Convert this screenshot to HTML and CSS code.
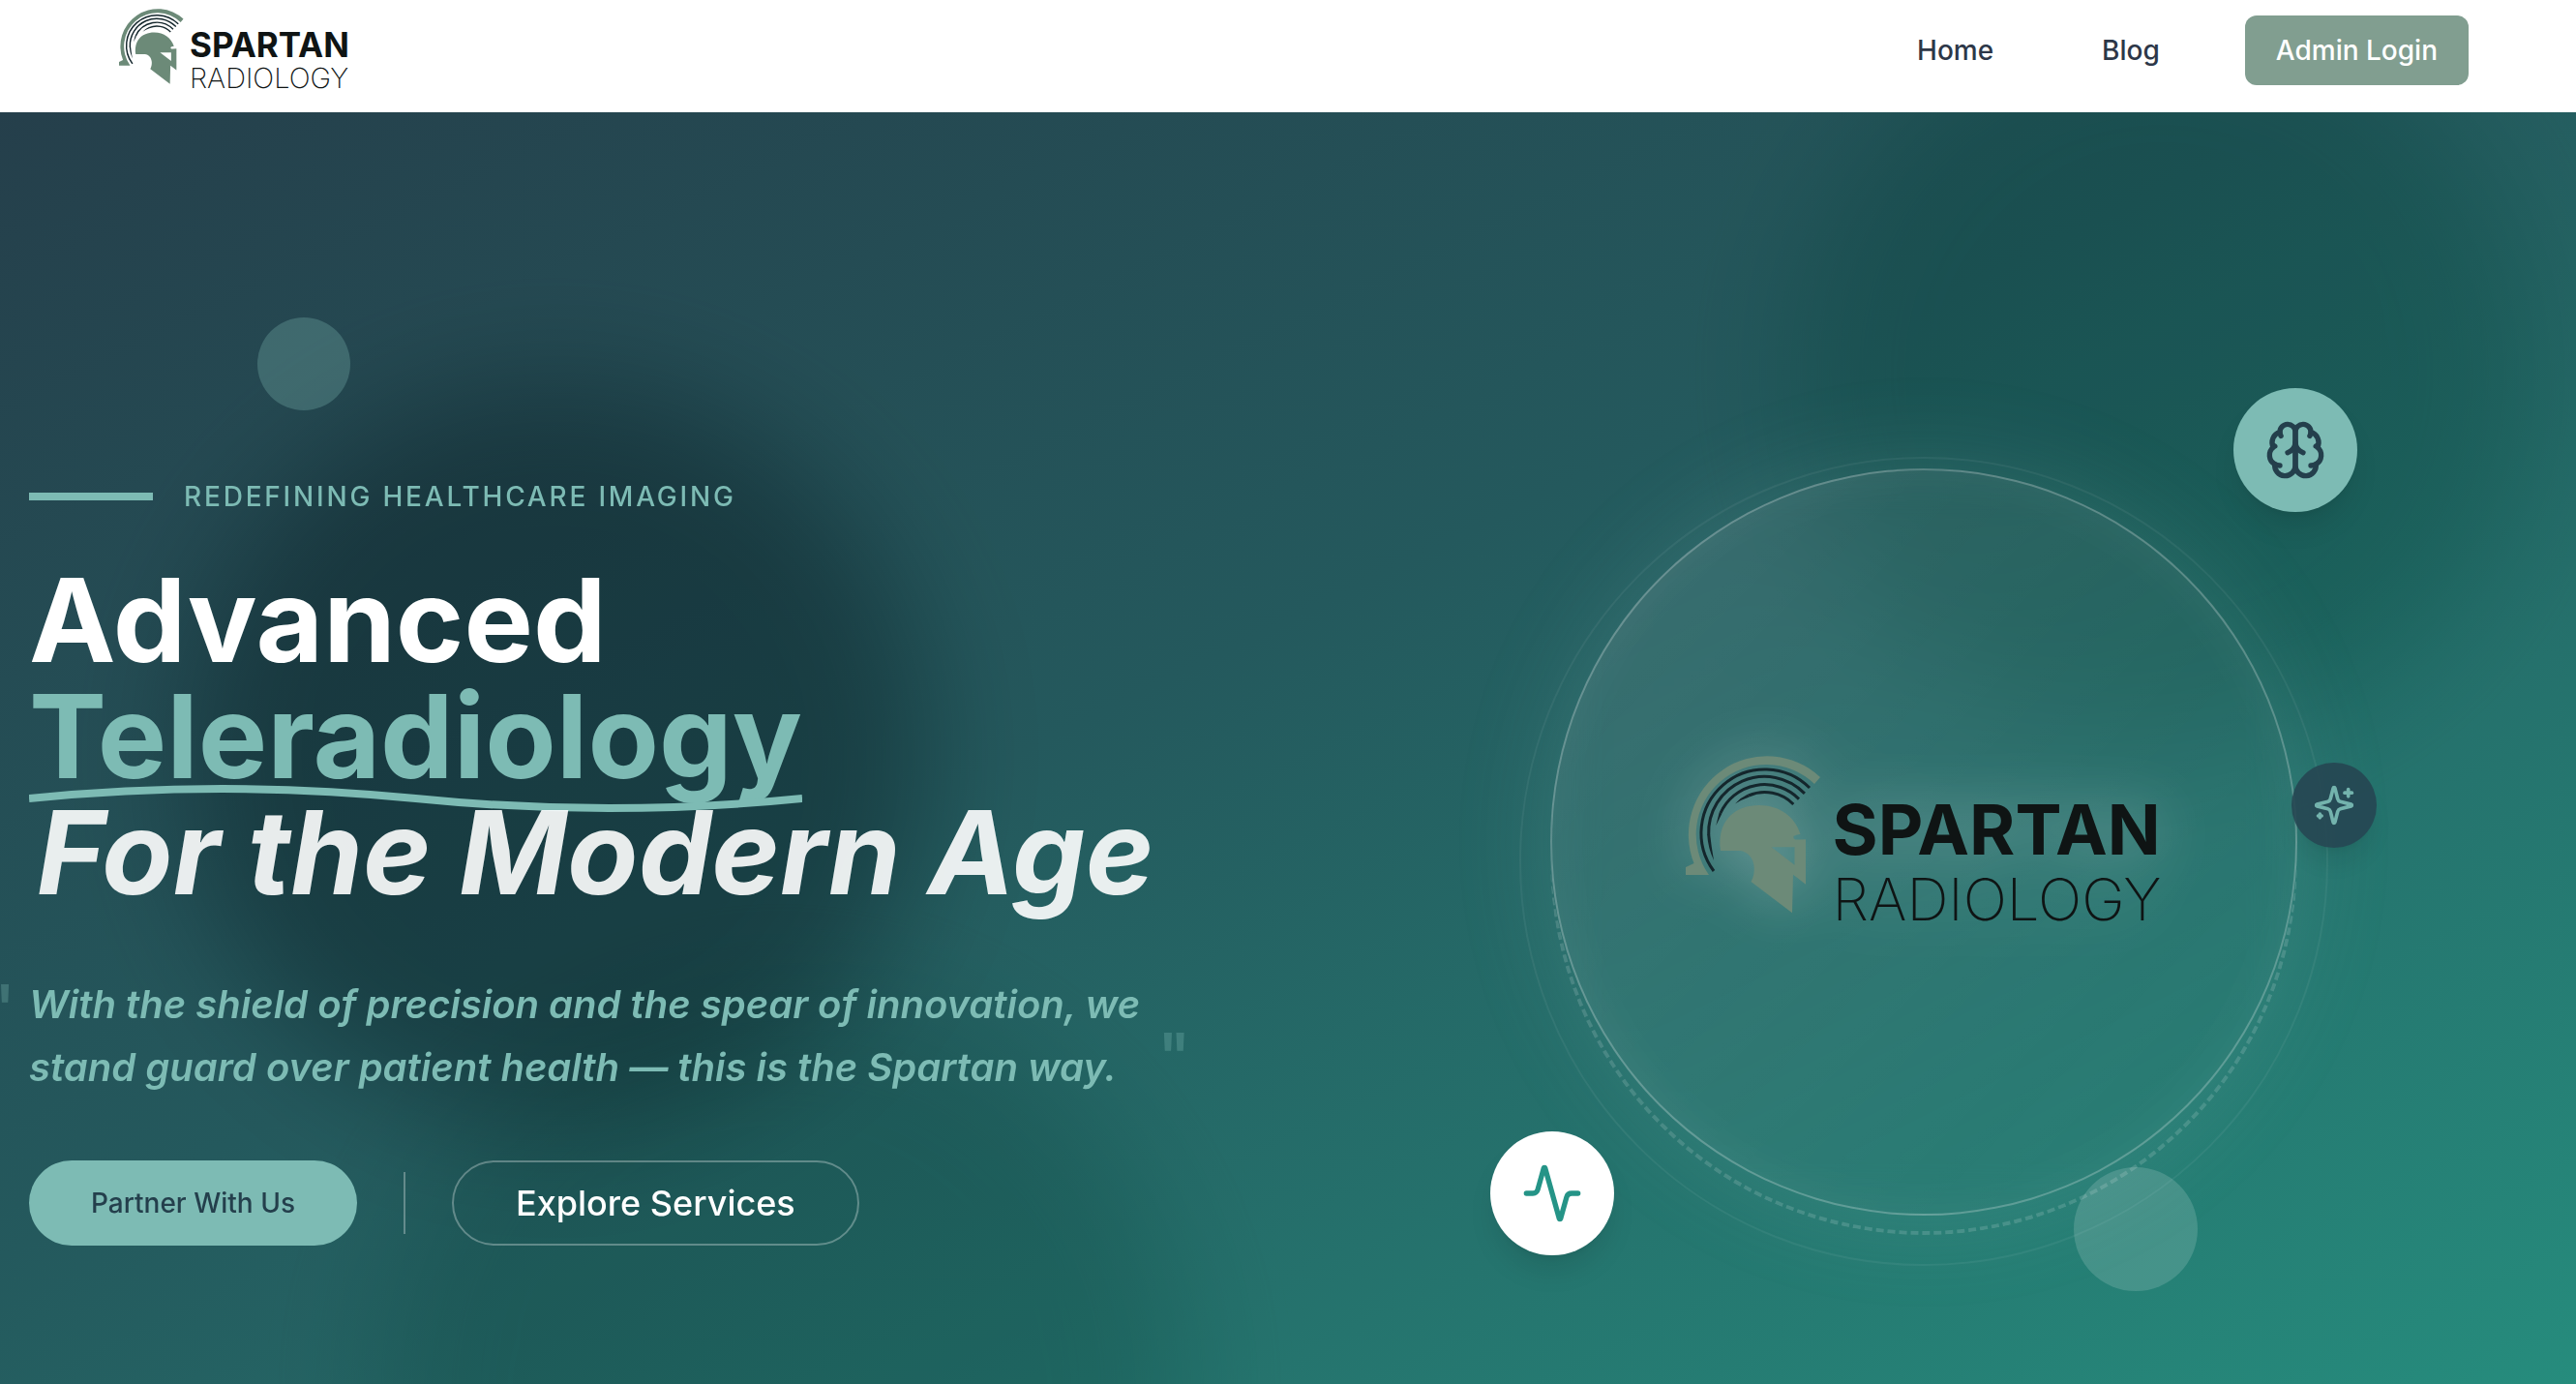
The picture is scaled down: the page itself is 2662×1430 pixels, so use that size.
FILE: index.html
```html
<!DOCTYPE html>
<html lang="en">
<head>
<meta charset="utf-8">
<meta name="viewport" content="width=device-width, initial-scale=1">
<title>Spartan Radiology</title>
<link rel="stylesheet" href="styles.css">
</head>
<body>
<svg class="sprite" aria-hidden="true">
  <symbol id="helmet" viewBox="0 0 140 163">
    <path class="helmet-fill" d="M139 22A81 81 0 0 0 8.500 111L0 115V123H24A72.300 72.300 0 0 1 133 29Z"/>
    <g class="helmet-lines">
      <path d="M128 33A65.750 65.750 0 0 0 29 119"/>
      <path d="M122.900 38.900A57.800 57.800 0 0 0 23.700 82"/>
      <path d="M117 44.600A49.800 49.800 0 0 0 36 59"/>
      <path d="M111.300 50A41.800 41.800 0 0 0 65 41"/>
    </g>
    <g class="helmet-tips">
      <path d="M22.200 81.500Q23 95 29 108Q26.500 94 25.200 81.500Z"/>
      <path d="M34.600 58.400L31.300 72L37.400 59.600Z"/>
      <path d="M64.400 39.600Q57 43 51 49.400Q58 45 65.600 42.400Z"/>
    </g>
    <path class="helmet-fill" fill-rule="evenodd" d="M36 98C32 70 48 51 76 51C97 51 113 63 118.600 81C114 82 111.500 82 111.400 84C111.500 86 113 86.700 116 86.500L124 86.300V132.700L111 122.700L110 162.300L67.500 130C70 125 71 121 70.700 115C70 105 64 99 56 98ZM88.600 94.300H112.500V112.700Z"/>
  </symbol>
</svg>

<header class="nav">
  <a class="brand" href="#" aria-label="Spartan Radiology">
    <svg class="brand-mark" aria-hidden="true"><use href="#helmet"/></svg>
    <span class="brand-words"><span class="brand-strong">SPARTAN</span><span class="brand-light">RADIOLOGY</span></span>
  </a>
  <nav class="nav-links">
    <a class="nav-link" href="#">Home</a>
    <a class="nav-link" href="#">Blog</a>
    <button class="nav-login" type="button">Admin Login</button>
  </nav>
</header>

<main class="hero">
  <div class="blob blob-navy"></div>
  <div class="blob blob-teal"></div>
  <div class="blob blob-mint"></div>
  <div class="orb orb-small"></div>

  <div class="hero-grid">
    <section class="copy">
      <p class="eyebrow"><span class="eyebrow-bar"></span>REDEFINING HEALTHCARE IMAGING</p>
      <h1 class="title">
        <span class="title-line">Advanced</span>
        <span class="title-accent">Teleradiology<svg class="swash" viewBox="0 0 800 28" preserveAspectRatio="none" aria-hidden="true"><path d="M0 14Q200 -6 400 14T800 14"/></svg></span>
        <span class="title-line title-italic">For the Modern Age</span>
      </h1>
      <p class="quote">With the shield of precision and the spear of innovation, we stand guard over patient health — this is the Spartan way.</p>
      <div class="actions">
        <button class="btn btn-solid" type="button">Partner With Us</button>
        <span class="divider"></span>
        <button class="btn btn-outline" type="button">Explore Services</button>
      </div>
    </section>

    <section class="visual">
      <div class="rings">
        <div class="ring-dashed"></div>
        <div class="disc">
          <div class="disc-logo">
            <svg class="disc-mark" aria-hidden="true"><use href="#helmet"/></svg>
            <span class="disc-words"><span class="disc-strong">SPARTAN</span><span class="disc-light">RADIOLOGY</span></span>
          </div>
        </div>
        <div class="badge badge-brain">
          <svg class="icon" viewBox="0 0 24 24" aria-hidden="true"><path d="M12 5a3 3 0 1 0-5.997.125 4 4 0 0 0-2.526 5.770 4 4 0 0 0 .556 6.588A4 4 0 1 0 12 18Z"/><path d="M12 5a3 3 0 1 1 5.997.125 4 4 0 0 1 2.526 5.770 4 4 0 0 1-.556 6.588A4 4 0 1 1 12 18Z"/><path d="M15 13a4.500 4.500 0 0 1-3-4 4.500 4.500 0 0 1-3 4"/><path d="M17.599 6.500a3 3 0 0 0 .399-1.375"/><path d="M6.003 5.125A3 3 0 0 0 6.401 6.500"/><path d="M3.477 10.896a4 4 0 0 1 .585-.396"/><path d="M19.938 10.500a4 4 0 0 1 .585.396"/><path d="M6 18a4 4 0 0 1-1.967-.516"/><path d="M19.967 17.484A4 4 0 0 1 18 18"/></svg>
        </div>
        <div class="badge badge-sparkles">
          <svg class="icon icon-small" viewBox="0 0 24 24" aria-hidden="true"><path d="M9.937 15.500A2 2 0 0 0 8.500 14.063l-6.135-1.582a.5.5 0 0 1 0-.962L8.500 9.936A2 2 0 0 0 9.937 8.500l1.582-6.135a.5.5 0 0 1 .963 0L14.063 8.500A2 2 0 0 0 15.500 9.937l6.135 1.581a.5.5 0 0 1 0 .964L15.500 14.063a2 2 0 0 0-1.437 1.437l-1.582 6.135a.5.5 0 0 1-.963 0z"/><path d="M20 3v4"/><path d="M22 5h-4"/><path d="M4 17v2"/><path d="M5 18H3"/></svg>
        </div>
        <div class="badge badge-pulse">
          <svg class="icon" viewBox="0 0 24 24" aria-hidden="true"><path d="M22 12h-2.480a2 2 0 0 0-1.930 1.460l-2.350 8.360a.25.25 0 0 1-.480 0L9.240 2.180a.25.25 0 0 0-.480 0l-2.350 8.360A2 2 0 0 1 4.490 12H2"/></svg>
        </div>
        <div class="orb orb-large"></div>
      </div>
    </section>
  </div>
</main>
</body>
</html>
```
FILE: styles.css
```css
:root {
  --navy: #264653;
  --teal: #2a9d8f;
  --mint: #7dbbb4;
  --sage: #819e90;
}

* { box-sizing: border-box; }

body {
  margin: 0;
  min-height: 100vh;
  display: flex;
  flex-direction: column;
  font-family: Inter, "Liberation Sans", sans-serif;
  background: #fff;
}

h1, p { margin: 0; }
button { font-family: inherit; cursor: pointer; }
a { text-decoration: none; }

.sprite { position: absolute; width: 0; height: 0; }
.helmet-fill { fill: #6c8a78; }
.helmet-lines { fill: none; stroke: #14262c; stroke-width: 3; }
.helmet-tips { fill: #14262c; }

/* Navigation */
.nav {
  display: flex;
  align-items: flex-start;
  justify-content: space-between;
  height: 116px;
  padding: 9px 111px 0 123px;
  background: #fff;
}
.brand { display: flex; gap: 6px; color: #0f1414; }
.brand-mark { width: 67px; height: 78px; }
.brand-words { display: flex; flex-direction: column; padding-top: 18px; }
.brand-strong { font-size: 35px; line-height: 38px; font-weight: 700; }
.brand-light { font-size: 29px; line-height: 32px; font-weight: 200; }

.nav-links { display: flex; align-items: center; gap: 64px; padding-top: 7px; }
.nav-link { padding: 0 24px; font-size: 28px; line-height: 40px; font-weight: 500; color: #2d3748; }
.nav-login {
  height: 72px;
  padding: 0 32px;
  border: 0;
  border-radius: 12px;
  background: var(--sage);
  color: #fff;
  font-size: 28px;
  font-weight: 500;
}

/* Hero */
.hero {
  position: relative;
  isolation: isolate;
  flex: 1;
  display: flex;
  align-items: center;
  padding: 234px 30px 0;
  overflow: hidden;
  background: linear-gradient(to bottom right, #253f4b, #24595d 45%, #268c7d);
}
.hero-grid {
  flex: 1;
  display: grid;
  grid-template-columns: 1fr 1fr;
  align-items: center;
  gap: 24px;
}

.blob {
  position: absolute;
  z-index: -1;
  width: 768px;
  height: 768px;
  border-radius: 50%;
  mix-blend-mode: multiply;
  filter: blur(64px);
  opacity: 0.4;
}
.blob-navy { left: 190px; top: 280px; background: var(--navy); }
.blob-teal { right: 44px; top: -116px; background: #2fb5a0; opacity: 0.35; }
.blob-mint { left: 384px; top: 900px; width: 844px; height: 844px; background: var(--mint); }

.orb { position: absolute; border-radius: 50%; }
.orb-small { left: 10%; top: 212px; width: 96px; height: 96px; background: rgba(125, 187, 180, 0.3); }
.orb-large { right: 133px; bottom: -28px; width: 128px; height: 128px; background: rgba(255, 255, 255, 0.15); }

/* Left column */
.eyebrow {
  display: flex;
  align-items: center;
  gap: 32px;
  margin-bottom: 48px;
  font-size: 28px;
  line-height: 40px;
  font-weight: 500;
  letter-spacing: 0.1em;
  color: var(--mint);
}
.eyebrow-bar { width: 128px; height: 8px; background: var(--mint); }

.title { font-size: 120px; line-height: 120px; font-weight: 700; color: #fff; }
.title-line { display: block; }
.title-accent { position: relative; display: table; color: var(--mint); }
.title-italic { position: relative; padding-left: 8px; font-style: italic; color: rgba(255, 255, 255, 0.9); }
.swash {
  position: absolute;
  left: 0;
  bottom: -18px;
  width: 100%;
  height: 28px;
  fill: none;
  stroke: var(--mint);
  stroke-width: 8;
}

.quote {
  position: relative;
  width: fit-content;
  max-width: 1184px;
  margin: 64px 0;
  font-size: 40px;
  line-height: 65px;
  font-weight: 600;
  font-style: italic;
  color: var(--mint);
}
.quote::before,
.quote::after {
  content: '"';
  position: absolute;
  font-size: 64px;
  line-height: 72px;
  font-style: normal;
  opacity: 0.3;
}
.quote::before { left: -48px; top: 0; }
.quote::after { right: -16px; bottom: 8px; }

.actions { display: flex; align-items: center; gap: 48px; }
.btn { height: 88px; padding: 0 64px; border-radius: 44px; font-weight: 500; }
.btn-solid { border: 0; background: var(--mint); color: #243f4c; font-size: 28px; }
.btn-outline { border: 2px solid rgba(255, 255, 255, 0.3); background: none; color: #fff; font-size: 36px; }
.divider { width: 2px; height: 64px; background: rgba(255, 255, 255, 0.3); }

/* Right column */
.visual { display: flex; justify-content: center; }
.rings {
  position: relative;
  width: 836px;
  height: 836px;
  border: 2px solid rgba(255, 255, 255, 0.06);
  border-radius: 50%;
}
/* The mask keeps the dashes out of the translucent disc */
.ring-dashed {
  position: absolute;
  inset: 30px;
  border: 4px dashed rgba(255, 255, 255, 0.15);
  border-radius: 50%;
  mask-image: radial-gradient(circle at 50% 366px, transparent 386px, #000 387px);
}
.disc {
  position: absolute;
  left: 30px;
  right: 30px;
  top: 10px;
  height: 772px;
  display: flex;
  align-items: center;
  justify-content: center;
  border: 2px solid rgba(255, 255, 255, 0.25);
  border-radius: 50%;
  background: linear-gradient(to bottom right, rgba(255, 255, 255, 0.1), rgba(255, 255, 255, 0));
  backdrop-filter: blur(24px);
  box-shadow: 0 0 100px rgba(125, 187, 180, 0.2), inset 0 0 60px rgba(255, 255, 255, 0.05);
}
.disc-logo {
  display: flex;
  gap: 12px;
  color: #0f1414;
  filter: drop-shadow(0 0 30px rgba(255, 255, 255, 0.3));
}
.disc-mark { width: 140px; height: 163px; }
.disc-words { display: flex; flex-direction: column; padding-top: 34px; }
.disc-strong { font-size: 72px; line-height: 84px; font-weight: 700; }
.disc-light { font-size: 60px; line-height: 60px; font-weight: 200; }

.badge {
  position: absolute;
  display: grid;
  place-items: center;
  width: 128px;
  height: 128px;
  border-radius: 50%;
  box-shadow: 0 20px 30px -6px rgba(0, 0, 0, 0.1), 0 8px 12px -8px rgba(0, 0, 0, 0.1);
}
.badge-brain { right: -32px; top: -73px; background: var(--mint); color: #243f4c; }
.badge-sparkles { right: -52px; top: 314px; width: 88px; height: 88px; background: var(--navy); color: var(--mint); opacity: 0.9; }
.badge-pulse { left: -32px; bottom: 9px; background: #fff; color: #259487; }
.icon {
  width: 64px;
  height: 64px;
  fill: none;
  stroke: currentColor;
  stroke-width: 2;
  stroke-linecap: round;
  stroke-linejoin: round;
}
.icon-small { width: 44px; height: 44px; }
```
